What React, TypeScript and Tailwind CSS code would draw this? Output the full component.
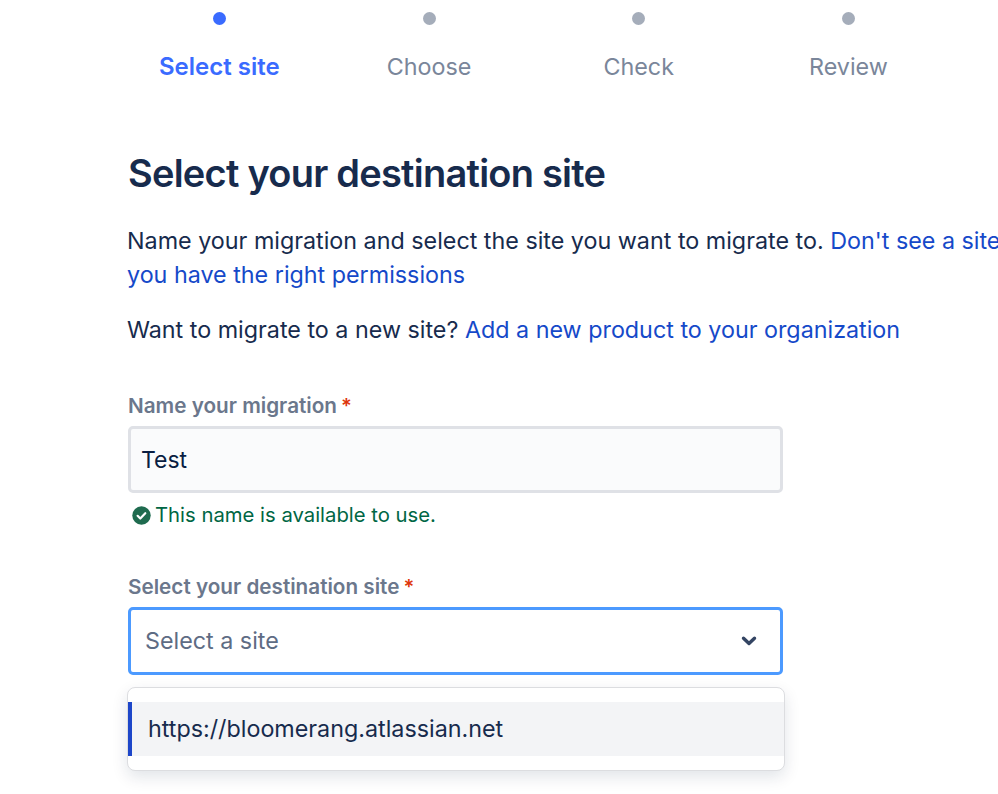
const steps = [
  { label: 'Select site', active: true },
  { label: 'Choose', active: false },
  { label: 'Check', active: false },
  { label: 'Review', active: false },
]

function Label({ text }: { text: string }) {
  return (
    <div className="flex h-[24px] items-center pt-[1px] text-[20.7px] font-semibold leading-[24px] text-[#6b778c]">
      {text}
      <span className="ml-[4px] text-[20px] text-[#de350b]">*</span>
    </div>
  )
}

export default function App() {
  return (
    <div className="h-[794px] w-[998px] overflow-hidden bg-white pl-[128px] font-['Inter',sans-serif] text-[#172b4d]">
      <div className="-ml-[13.5px] flex w-[840px]">
        {steps.map((s) => (
          <div key={s.label} className="flex w-[209.7px] shrink-0 flex-col items-center pt-[12px]">
            <div className={`h-[13px] w-[13px] rounded-full ${s.active ? 'bg-[#3a6bff]' : 'bg-[#a5adba]'}`} />
            <div className={`mt-[26px] leading-[32px] ${s.active ? 'text-[24px] font-semibold text-[#3a6bff]' : 'text-[23.3px] text-[#7a869a]'}`}>
              {s.label}
            </div>
          </div>
        ))}
      </div>

      <h1 className="mt-[66px] text-[38px] font-semibold leading-[48px] tracking-[-0.76px] text-[#172b4d]">
        Select your destination site
      </h1>

      <p className="mt-[27px] -ml-[1px] whitespace-nowrap text-[23.3px] leading-[34px] text-[#172b4d]">
        Name your migration and select the site you want to migrate to.{' '}
        <span className="text-[#1549c9]">Don't see a site? Make sure</span>
        <br />
        <span className="text-[#1549c9]">you have the right permissions</span>
      </p>
      <p className="mt-[21px] -ml-[1px] whitespace-nowrap text-[23.3px] leading-[34px]">
        Want to migrate to a new site? <span className="text-[#1549c9]">Add a new product to your organization</span>
      </p>

      <div className="mt-[46px] w-[655px]">
        <Label text="Name your migration" />
        <div className="mt-[9px] flex h-[67px] items-center rounded-[5px] border-[3px] border-[#dfe1e6] bg-[#fafbfc] px-[10px] pt-[2px] text-[23px] text-[#091e42]">
          Test
        </div>
        <div className="mt-[8px] flex h-[28px] items-center pl-[4px] text-[20.3px] text-[#006644]">
          <svg width="19" height="19" viewBox="0 0 19 19" className="mr-[4px] shrink-0">
            <circle cx="9.5" cy="9.5" r="9.2" fill="#1f6b4f" />
            <path d="M5.6 9.8l2.7 2.7 5-5.3" fill="none" stroke="#fff" strokeWidth="2.2" strokeLinecap="round" strokeLinejoin="round" />
          </svg>
          This name is available to use.
        </div>

        <div className="mt-[45px]">
          <Label text="Select your destination site" />
        </div>
        <div className="mt-[9px] flex h-[68px] items-center justify-between rounded-[5px] border-[3px] border-[#4c9aff] bg-white pl-[14px] pr-[23px] text-[23.3px] text-[#5e6c84]">
          Select a site
          <svg width="16" height="12" viewBox="0 0 16 12">
            <path d="M2.5 3.2l5.500 5.300L13.500 3.2" fill="none" stroke="#344563" strokeWidth="3.4" strokeLinecap="round" strokeLinejoin="round" />
          </svg>
        </div>
        <div className="mt-[12px] -ml-[1px] h-[84px] w-[658px] rounded-[8px] border border-[#dcdde0] bg-white py-[14px] shadow-[0_6px_16px_rgba(9,30,66,0.12)]">
          <div className="flex h-[54px] items-center border-l-[4px] border-[#1d46c9] bg-[#f3f4f6] pl-[16px] pt-[1px] text-[23.3px] text-[#172b4d]">
            https://bloomerang.atlassian.net
          </div>
        </div>
      </div>
    </div>
  )
}
